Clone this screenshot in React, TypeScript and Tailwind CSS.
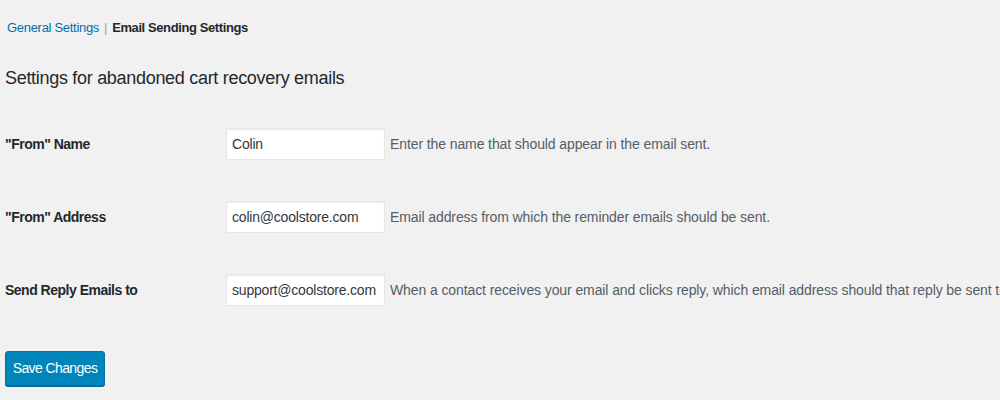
import React from 'react';

const rows = [
  { label: '"From" Name', value: 'Colin', help: 'Enter the name that should appear in the email sent.' },
  { label: '"From" Address', value: 'colin@coolstore.com', help: 'Email address from which the reminder emails should be sent.' },
  {
    label: 'Send Reply Emails to',
    value: 'support@coolstore.com',
    help: 'When a contact receives your email and clicks reply, which email address should that reply be sent to?',
  },
];

const App: React.FC = () => {
  return (
    <div className="w-[1000px] h-[400px] overflow-hidden bg-[#f1f1f1] text-[#23282d] font-['Liberation_Sans',Arial,sans-serif]">
      <div className="pl-[7px] pt-[19px] flex items-center h-[18px] box-content text-[13px] tracking-[-0.3px]">
        <a className="text-[#0073aa]">General Settings</a>
        <span className="mx-[5px] text-[#a0a5aa]">|</span>
        <span className="font-bold text-[#23282d] tracking-[-0.4px]">Email Sending Settings</span>
      </div>

      <h2 className="pl-[5px] mt-[31px] text-[18px] leading-[20px] tracking-[-0.3px] text-[#23282d]">
        Settings for abandoned cart recovery emails
      </h2>

      <div className="mt-[40px] pl-[5px] flex flex-col gap-[41px]">
        {rows.map(row => (
          <div key={row.label} className="flex items-center h-[32px] whitespace-nowrap">
            <label className="w-[221px] shrink-0 text-[14px] font-bold text-[#23282d] tracking-[-0.5px]">{row.label}</label>
            <input
              readOnly
              value={row.value}
              className="w-[159px] h-[32px] shrink-0 bg-white border border-[#e5e5e5] shadow-[inset_0_1px_2px_rgba(0,0,0,0.07)] px-[5px] text-[14px] tracking-[-0.2px] text-[#32373c] outline-none"
            />
            <span className="ml-[5px] text-[14px] text-[#555d66] tracking-[-0.1px]">{row.help}</span>
          </div>
        ))}
      </div>

      <div className="pl-[5px] mt-[45px]">
        <button className="w-[100px] h-[35px] rounded-[3px] bg-[#0085ba] border border-[#0073aa] text-white text-[14px] tracking-[-0.6px] shadow-[0_1px_0_#006799]">
          Save Changes
        </button>
      </div>
    </div>
  );
};

export default App;
